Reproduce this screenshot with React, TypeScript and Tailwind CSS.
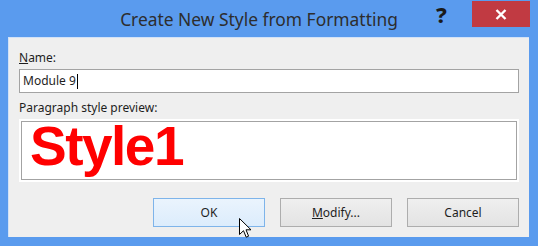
import React from "react";

const font = { fontFamily: '"Noto Sans", "Open Sans", sans-serif' };

const DialogButton = ({
  children,
  primary = false,
}: {
  children: React.ReactNode;
  primary?: boolean;
}) => (
  <button
    className={`w-[112px] h-[29px] border text-[12px] text-[#1e1e1e] flex items-center justify-center ${
      primary
        ? "bg-gradient-to-b from-[#eaf4fd] to-[#dcecfc] border-[#7eb4ea]"
        : "bg-gradient-to-b from-[#efefef] to-[#e3e3e3] border-[#adadad]"
    }`}
  >
    {children}
  </button>
);

export default function App() {
  return (
    <div className="w-[538px] h-[246px] bg-[#5a9bee] flex flex-col" style={font}>
      {/* Title bar */}
      <div className="h-[37px] flex items-start relative">
        <div className="flex-1 text-center text-[17.4px] leading-[38px] text-[#2d2d2d] pr-[20px]">
          Create New Style from Formatting
        </div>
        <div className="absolute left-[436px] top-[1px] text-[22px] font-extrabold text-[#1a1a1a] leading-[26px]">
          ?
        </div>
        <div className="absolute left-[472px] top-[1px] w-[58px] h-[26px] bg-[#c13a42] flex items-center justify-center">
          <svg width="12" height="11" viewBox="0 0 12 11">
            <path d="M1.5 1 L10.5 10 M10.5 1 L1.5 10" stroke="white" strokeWidth="2.4" />
          </svg>
        </div>
      </div>

      {/* Content panel */}
      <div className="ml-[8px] mr-[9px] h-[200px] bg-[#efefef] border-t border-l border-[#d2e2f7] px-[10px] pt-[13px] relative">
        <div className="text-[12px] text-[#1e1e1e] leading-[14px]">
          <span className="underline">N</span>ame:
        </div>
        <div className="mt-[4px] h-[24px] bg-white border border-[#a3a3a3] flex items-center pl-[3px] text-[12px] text-[#1e1e1e]">
          Module 9<span className="inline-block w-[1px] h-[15px] bg-black ml-[1px]" />
        </div>
        <div className="mt-[8px] text-[12px] text-[#1e1e1e] leading-[14px]">
          Paragraph style preview:
        </div>
        <div className="mt-[4px] h-[63px] bg-white p-[2px]">
          <div className="h-full border border-[#a3a3a3] pl-[8px]">
            <div
              className="text-[55px] font-bold text-[#ff0000] leading-none tracking-[-1.5px] mt-[-3px]"
              style={{ fontFamily: '"Liberation Sans", Arial, sans-serif' }}
            >
              Style1
            </div>
          </div>
        </div>

        <div className="mt-[16px] flex justify-end gap-[15px]">
          <DialogButton primary>OK</DialogButton>
          <DialogButton>
            <span>
              <span className="underline">M</span>odify...
            </span>
          </DialogButton>
          <DialogButton>Cancel</DialogButton>
        </div>

        {/* Mouse cursor */}
        <svg
          className="absolute left-[230px] top-[180px]"
          width="13"
          height="21"
          viewBox="0 0 13 21"
        >
          <path
            d="M0.5 0.5 L0.5 16.5 L4.5 12.7 L7.2 19.2 L9.6 18.2 L7 11.8 L12 11.8 Z"
            fill="white"
            stroke="black"
            strokeWidth="1"
            strokeLinejoin="miter"
          />
        </svg>
      </div>
    </div>
  );
}
